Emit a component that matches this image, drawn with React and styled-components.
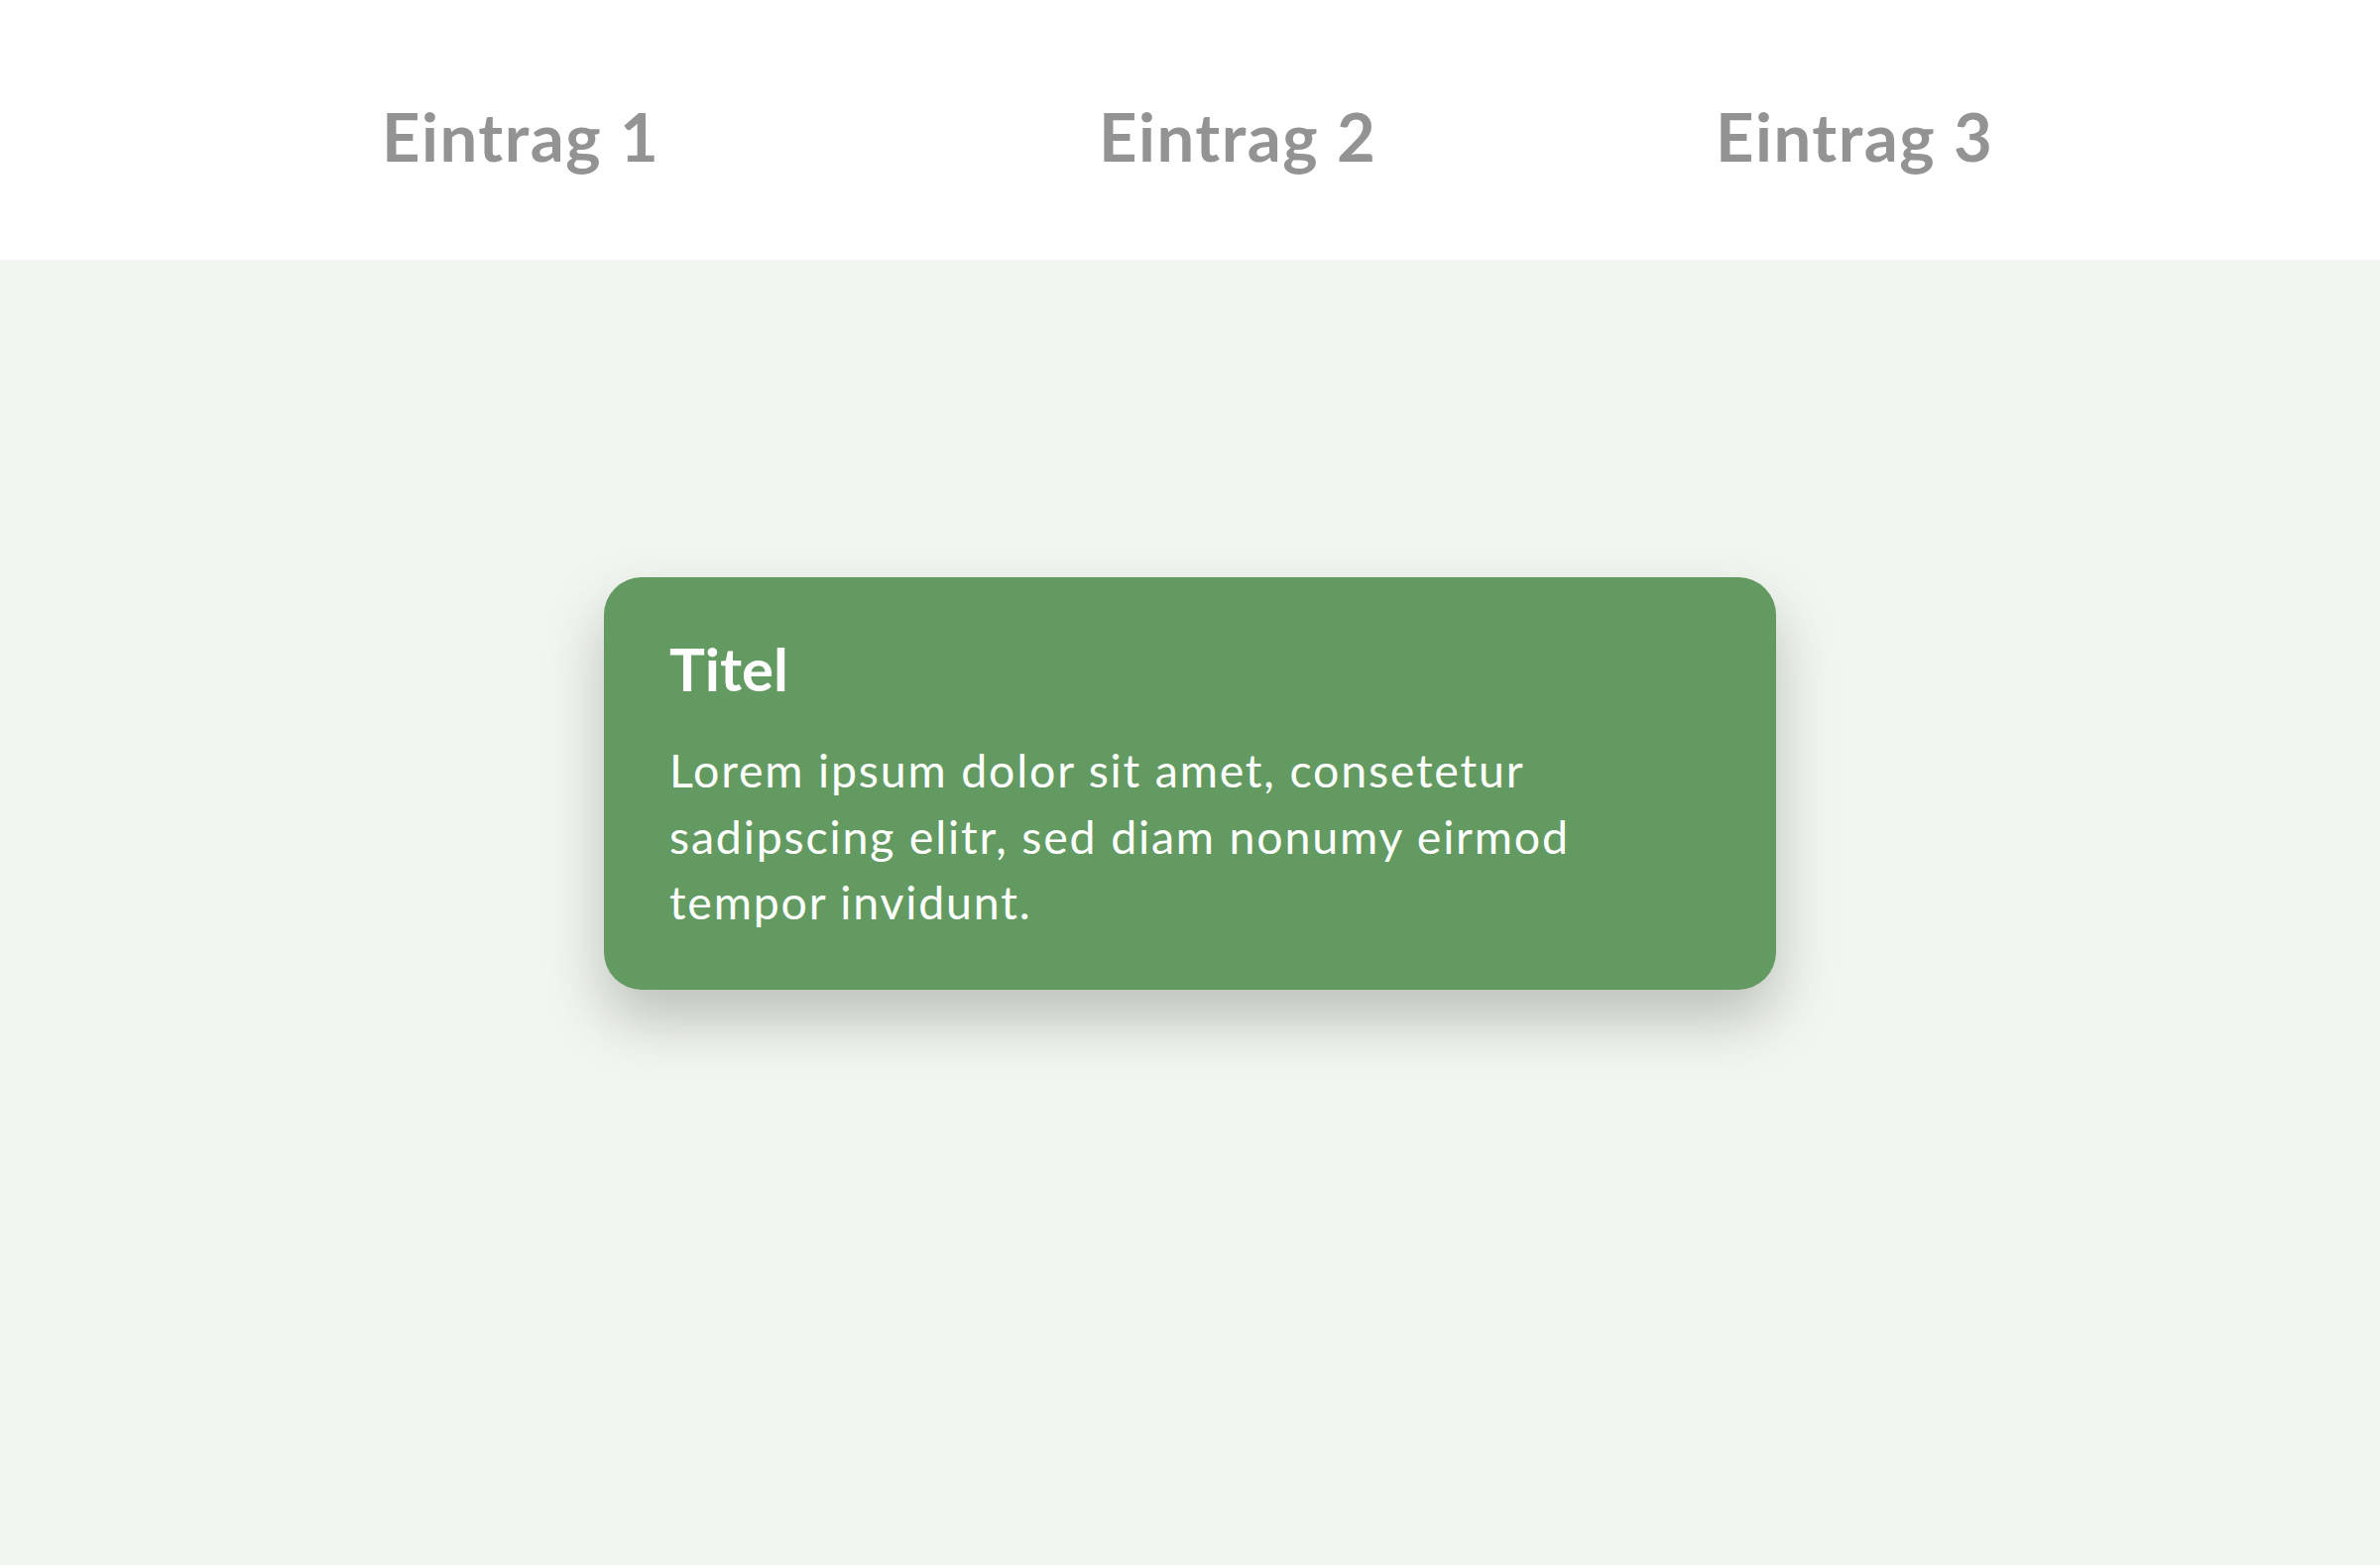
import React from 'react'
import styled, { createGlobalStyle } from 'styled-components'

const GlobalStyle = createGlobalStyle`
    html, body {
        margin: 0;
        padding: 0;
        background: #f2f6f0;
        font-family: "Lato", "Open Sans", sans-serif;
    }
`;

const entries = ['Eintrag 1', 'Eintrag 2', 'Eintrag 3'];

export default function App() {
    return (
        <>
            <GlobalStyle />
            <Page>
                <Header>
                    <Nav>
                        {entries.map((e) => (
                            <NavItem key={e}>{e}</NavItem>
                        ))}
                    </Nav>
                </Header>
                <Main>
                    <Card>
                        <Title>Titel</Title>
                        <Text>
                            Lorem ipsum dolor sit amet, consetetur sadipscing elitr, sed diam nonumy eirmod tempor invidunt.
                        </Text>
                    </Card>
                </Main>
            </Page>
        </>
    )
}

const Page = styled.div`
    min-height: 100vh;
    background: #f2f6f0;
`;

const Header = styled.header`
    height: 262px;
    box-sizing: border-box;
    padding: 97px 0 0 385px;
    background: #ffffff;
`;

const Nav = styled.nav`
    display: grid;
    grid-template-columns: 723px 622px auto;
`;

const NavItem = styled.a`
    font-size: 67px;
    line-height: 1.2;
    font-weight: 700;
    letter-spacing: 1.5px;
    color: #939393;
    cursor: pointer;
`;

const Main = styled.main`
    display: flex;
    justify-content: center;
    padding-top: 320px;
`;

const Card = styled.section`
    width: 1182px;
    box-sizing: border-box;
    padding: 56px 66px 55px;
    border-radius: 38px;
    background: #629a61;
    color: #ffffff;
    box-shadow: 0 30px 60px rgba(40, 50, 40, 0.27);
`;

const Title = styled.h2`
    margin: 0 0 33px;
    font-size: 60px;
    line-height: 1.2;
    font-weight: 700;
`;

const Text = styled.p`
    margin: 0;
    max-width: 980px;
    font-size: 46.5px;
    line-height: 66.5px;
    font-weight: 400;
    letter-spacing: 1.8px;
`;
